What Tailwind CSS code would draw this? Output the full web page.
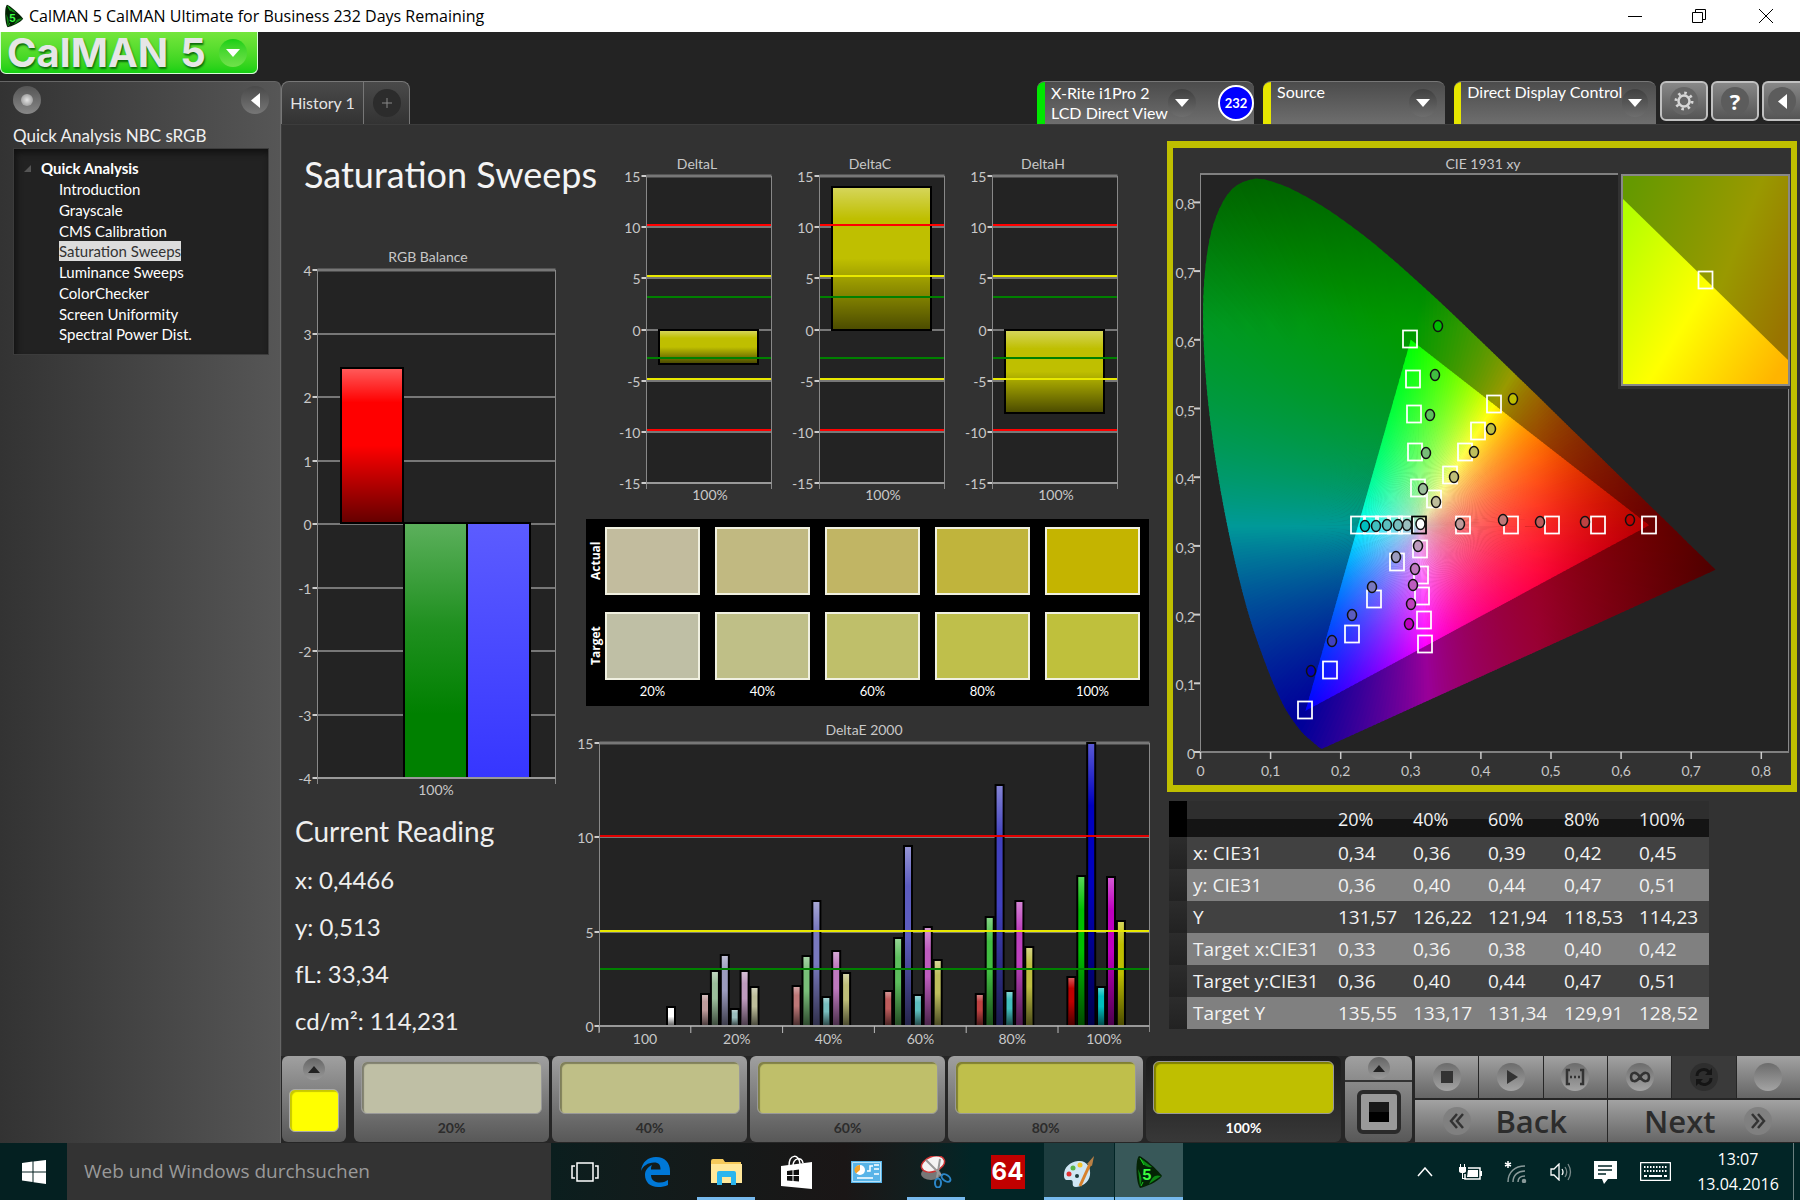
<!DOCTYPE html>
<html lang="en">
<head>
    <meta charset="UTF-8">
    <meta name="viewport" content="width=device-width, initial-scale=1.0">
    <title>CalMAN 5 CalMAN Ultimate for Business</title>
    <script src="https://cdn.jsdelivr.net/npm/@tailwindcss/browser@4"></script>
</head>
<body class="min-h-screen flex flex-col bg-[#232323] font-['Lato','Open_Sans',sans-serif] text-white overflow-x-hidden">
    <!-- shared symbols -->
    <svg class="hidden" aria-hidden="true">
        <symbol id="calman" viewBox="0 0 28 34">
            <path d="M4 1C7 1 22 14 27 21C23 27 10 32 5 33C1 28 0 5 4 1Z" fill="#042304"/>
            <path d="M5 3C8 10 12 13 17 12ZM26 21C20 19 17 22 14 29ZM5 31C8 24 6 20 3 14Z" fill="#0d8a14"/>
            <path d="M5 3L9 10M6 31L8 27" stroke="#19d31f" stroke-width="1"/>
            <text x="7" y="25" font-family="Inter, sans-serif" font-size="15" font-weight="700" fill="#3dff3d" stroke="#021" stroke-width="2" paint-order="stroke">5</text>
        </symbol>
    </svg>

    <header class="h-8 bg-white text-black flex items-center pl-1">
        <svg class="w-5 h-6"><use href="#calman"/></svg>
        <h1 class="ml-[5px] flex-1 font-['Open_Sans',sans-serif] text-[16px] leading-5 whitespace-nowrap">CalMAN 5 CalMAN Ultimate for Business 232 Days Remaining</h1>
        <button aria-label="Minimize" class="w-16 h-8 flex items-center justify-center"><svg class="w-4 h-4" viewBox="0 0 16 16" stroke="#000"><path d="M1 8.5H15"/></svg></button>
        <button aria-label="Restore" class="w-16 h-8 flex items-center justify-center"><svg class="w-4 h-4" viewBox="0 0 16 16" stroke="#000" fill="none"><path d="M1.500 4.500H11.500V14.500H1.500ZM4.500 4.500V1.500H14.500V11.500H11.500"/></svg></button>
        <button aria-label="Close" class="w-[69px] h-8 flex items-center justify-center"><svg class="w-4 h-4" viewBox="0 0 16 16" stroke="#000"><path d="M1 1L15 15M15 1L1 15"/></svg></button>
    </header>

    <div class="flex-1 flex min-w-0">
        <!-- left side: logo and workflow tree -->
        <aside class="w-[281px] shrink-0 flex flex-col">
            <button class="w-[258px] h-[42px] rounded-b-md border border-t-0 border-[#d8ffd8] bg-linear-to-b from-[#74e63c] to-[#12d012] flex items-center pl-[6px] pr-[10px]">
                <span class="font-['Inter',sans-serif] font-bold text-[40px] leading-[38px] text-[#e6e6e6] flex-1 flex gap-3 [text-shadow:1px_2px_2px_#0a6b0a]"><span>CalMAN</span><span>5</span></span>
                <span class="w-7 h-7 rounded-full bg-linear-to-b from-[#12cf12] to-[#6fe24a] flex items-center justify-center"><svg class="w-[14px] h-2" viewBox="0 0 14 8"><path d="M0 0H14L7 8Z" fill="#fff"/></svg></span>
            </button>
            <div class="mt-[7px] flex-1 rounded-tr-md border-t border-r border-[#666] bg-linear-to-r from-[#333] to-[#565656] pl-[13px] pr-[11px]">
                <div class="flex justify-between items-center pt-[4px]">
                    <button aria-label="Record" class="w-7 h-7 rounded-full bg-linear-to-b from-[#555] to-[#888] flex items-center justify-center"><span class="w-3 h-3 rounded-full bg-radial from-[#e5e5e5] to-[#888]"></span></button>
                    <button aria-label="Collapse" class="w-7 h-7 rounded-full bg-linear-to-b from-[#4a4a4a] to-[#777] flex items-center justify-center"><svg class="w-[9px] h-[15px]" viewBox="0 0 9 15"><path d="M9 0V15L0 7.500Z" fill="#fff"/></svg></button>
                </div>
                <h2 class="mt-[10px] text-[17px] leading-6 text-[#f0f0f0] whitespace-nowrap">Quick Analysis NBC sRGB</h2>
                <nav class="border border-[#3c3c3c] bg-[#222] shadow-[inset_2px_4px_6px_#111] pt-[9px] pb-[7px] pl-[10px] text-[15px] h-[207px]">
                    <p class="flex items-center gap-[10px] h-[21px] font-bold"><svg class="w-[7px] h-[7px]" viewBox="0 0 7 7"><path d="M7 0V7H0Z" fill="#555"/></svg>Quick Analysis</p>
                    <ul class="ml-[35px] h-[166px] grid auto-rows-fr items-center whitespace-nowrap">
                        <li><a href="#">Introduction</a></li>
                        <li><a href="#">Grayscale</a></li>
                        <li><a href="#">CMS Calibration</a></li>
                        <li><a href="#" aria-current="page" class="bg-[#dcdcdc] text-[#333] py-px">Saturation Sweeps</a></li>
                        <li><a href="#">Luminance Sweeps</a></li>
                        <li><a href="#">ColorChecker</a></li>
                        <li><a href="#">Screen Uniformity</a></li>
                        <li><a href="#">Spectral Power Dist.</a></li>
                    </ul>
                </nav>
            </div>
        </aside>

        <main class="flex-1 min-w-0 flex flex-col">
            <!-- tabs and device controls -->
            <div class="h-[92px] flex items-end">
                <div class="h-[43px] flex rounded-t-lg border border-b-0 border-[#777] bg-linear-to-b from-[#4a4a4a] to-[#333]">
                    <button class="w-[82px] border-r border-[#777] text-[16px] text-[#e4e4e4]">History 1</button>
                    <button aria-label="Add tab" class="w-[45px] flex items-center justify-center"><span class="w-7 h-7 rounded-full bg-[#2c2c2c] flex items-center justify-center"><svg class="w-3 h-3" viewBox="0 0 12 12" stroke="#888"><path d="M6 1V11M1 6H11"/></svg></span></button>
                </div>
                <div class="ml-auto flex items-start text-[16px] leading-[20px] text-left">
                    <div class="w-[217px] h-[43px] mr-[9px] flex rounded-t-lg overflow-hidden border-t border-[#777] bg-linear-to-b from-[#4c4c4c] to-[#6e6e6e]">
                        <span class="w-2 shrink-0 bg-[#00e600]"></span>
                        <button class="flex-1 flex items-center pl-[6px] pr-3 text-left"><span class="flex-1 whitespace-nowrap">X-Rite i1Pro 2<br>LCD Direct View</span><span class="w-7 h-7 rounded-full bg-linear-to-b from-[#404040] to-[#6e6e6e] flex items-center justify-center"><svg class="w-[14px] h-2" viewBox="0 0 14 8"><path d="M0 0H14L7 8Z" fill="#fff"/></svg></span></button>
                        <span class="w-px my-1 bg-[#333]"></span>
                        <button class="shrink-0 ml-[10px] mr-[3px] my-auto w-9 h-9 rounded-full border-2 border-white bg-[#0000ff] text-[13px] font-bold text-center">232</button>
                    </div>
                    <button class="w-[182px] h-[43px] mr-[9px] flex rounded-t-lg overflow-hidden border-t border-[#777] bg-linear-to-b from-[#4c4c4c] to-[#6e6e6e] pr-2 text-left">
                        <span class="w-2 h-full bg-[#e6e600]"></span><span class="pl-[6px] flex-1">Source</span><span class="mt-[7px] w-7 h-7 rounded-full bg-linear-to-b from-[#404040] to-[#6e6e6e] flex items-center justify-center"><svg class="w-[14px] h-2" viewBox="0 0 14 8"><path d="M0 0H14L7 8Z" fill="#fff"/></svg></span>
                    </button>
                    <button class="w-[202px] h-[43px] mr-1 flex rounded-t-lg overflow-hidden border-t border-[#777] bg-linear-to-b from-[#4c4c4c] to-[#6e6e6e] pr-2 text-left">
                        <span class="w-2 h-full bg-[#e6e600]"></span><span class="pl-[6px] flex-1 whitespace-nowrap">Direct Display Control</span><span class="mt-[7px] w-7 h-7 rounded-full bg-linear-to-b from-[#404040] to-[#6e6e6e] flex items-center justify-center"><svg class="w-[14px] h-2" viewBox="0 0 14 8"><path d="M0 0H14L7 8Z" fill="#fff"/></svg></span>
                    </button>
                    <button aria-label="Settings" class="w-12 h-10 mr-[3px] rounded-md border-2 border-[#c0c0c0] bg-linear-to-b from-[#888] to-[#555] flex items-center justify-center"><span class="w-7 h-7 rounded-full bg-[#666] flex items-center justify-center"><svg class="w-5 h-5" viewBox="0 0 20 20" fill="none" stroke="#d6d6d6"><circle cx="10" cy="10" r="5.500" stroke-width="2.500"/><circle cx="10" cy="10" r="8" stroke-width="3" stroke-dasharray="2.500 3.780"/></svg></span></button>
                    <button aria-label="Help" class="w-12 h-10 mr-[3px] rounded-md border-2 border-[#c0c0c0] bg-linear-to-b from-[#888] to-[#555] flex items-center justify-center"><span class="w-7 h-7 rounded-full bg-[#5c5c5c] font-['Open_Sans',sans-serif] font-bold text-[22px] leading-7 text-center">?</span></button>
                    <button aria-label="Hide bar" class="w-[38px] h-10 rounded-l-md border-2 border-r-0 border-[#c0c0c0] bg-linear-to-b from-[#888] to-[#555] flex items-center justify-center"><span class="w-7 h-7 rounded-full bg-[#5c5c5c] flex items-center justify-center"><svg class="w-[9px] h-[15px]" viewBox="0 0 9 15"><path d="M9 0V15L0 7.500Z" fill="#fff"/></svg></span></button>
                </div>
            </div>

            <div class="flex-1 bg-[#323232] border-t border-l border-[#3c3c3c] grid grid-cols-[minmax(0,300fr)_minmax(0,584fr)_minmax(0,634fr)] items-start">
                <section>
                    <h2 class="h-[114px] pl-[22px] pt-[27px] text-[36px] leading-[44px] whitespace-nowrap text-[#f4f4f4]">Saturation Sweeps</h2>
                    <svg id="rgbBalance" class="block w-full h-auto overflow-visible" viewBox="0 0 300 565"></svg>
                    <div class="pl-[13px] pt-[2px] text-[24px] leading-[47px] text-[#eee]">
                        <h3 class="text-[28px] leading-[50px]">Current Reading</h3>
                        <p>x: 0,4466</p>
                        <p>y: 0,513</p>
                        <p>fL: 33,34</p>
                        <p>cd/m²: 114,231</p>
                    </div>
                </section>

                <section>
                    <div class="pt-[14px] pl-[38px] pr-[27px] grid grid-cols-3">
                        <svg id="deltaL" class="block w-full h-auto overflow-visible" viewBox="0 0 173 370"></svg>
                        <svg id="deltaC" class="block w-full h-auto overflow-visible" viewBox="0 0 173 370"></svg>
                        <svg id="deltaH" class="block w-full h-auto overflow-visible" viewBox="0 0 173 370"></svg>
                    </div>
                    <div id="swatches" class="mt-[10px] ml-1 mr-[17px] h-[187px] bg-black pt-2 pr-[9px] flex flex-col"></div>
                    <svg id="deltaE" class="mt-[8px] block w-full h-auto overflow-visible" viewBox="0 0 584 340"></svg>
                </section>

                <section class="pt-4 pl-px pr-[3px]">
                    <div class="border-x-[6px] border-y-[7px] border-[#bfbf00]">
                        <svg id="cie" class="block w-full h-auto overflow-visible" viewBox="0 0 618 637"></svg>
                    </div>
                    <table class="mt-[9px] ml-[2px] w-[540px] table-fixed border-collapse text-left font-['Open_Sans',sans-serif] text-[19px] leading-8 text-[#f2f2f2]">
                        <colgroup><col class="w-[18px]"><col class="w-[146px]"><col class="w-[75px]"><col class="w-[75px]"><col class="w-[76px]"><col class="w-[75px]"><col class="w-[75px]"></colgroup>
                        <thead>
                            <tr class="h-9 bg-linear-to-b from-[#2e2e2e] from-50% to-[#141414] to-50%">
                                <td class="bg-black"></td><td></td>
                                <th class="pl-[5px] font-medium text-[18px]">20%</th><th class="pl-[5px] font-medium text-[18px]">40%</th><th class="pl-[5px] font-medium text-[18px]">60%</th><th class="pl-[5px] font-medium text-[18px]">80%</th><th class="pl-[5px] font-medium text-[18px]">100%</th>
                            </tr>
                        </thead>
                        <tbody id="readings"></tbody>
                    </table>
                </section>
            </div>

            <!-- level picker and transport -->
            <div class="h-[87px] pb-px flex bg-[#262626] text-[#2c2c2c]">
                <button aria-label="Color" class="w-[64px] ml-px mr-2 rounded-md bg-linear-to-b from-[#a0a0a0] to-[#585858] flex flex-col items-center gap-[9px] pt-[2px]">
                    <span class="w-[22px] h-[22px] rounded-full bg-linear-to-b from-[#666] to-[#999] flex items-center justify-center"><svg class="w-3 h-[7px]" viewBox="0 0 12 7"><path d="M0 7H12L6 0Z" fill="#222"/></svg></span>
                    <span class="w-[50px] h-[43px] rounded-md bg-[#ffff00] border border-[#aaa] shadow-[inset_2px_2px_1px_#c8c800]"></span>
                </button>
                <div id="levels" class="flex-1 grid grid-cols-5 gap-x-[3px]"></div>
                <div class="w-[67px] mr-[3px] ml-1 rounded-md overflow-hidden bg-linear-to-b from-[#a0a0a0] to-[#585858] flex flex-col">
                    <button aria-label="Show patterns" class="h-[26px] border-b-2 border-[#333] flex items-center justify-center"><span class="w-[22px] h-[22px] rounded-full bg-linear-to-b from-[#666] to-[#999] flex items-center justify-center"><svg class="w-3 h-[7px]" viewBox="0 0 12 7"><path d="M0 7H12L6 0Z" fill="#222"/></svg></span></button>
                    <button aria-label="Pattern window" class="flex-1 flex items-center justify-center"><span class="w-11 h-[44px] rounded-md border-4 border-[#2a2a2a] bg-[#999] flex items-center justify-center"><span class="w-5 h-5 bg-linear-to-b from-[#181818] from-50% to-black to-50%"></span></span></button>
                </div>
                <div class="w-[385px] flex flex-col gap-[2px]">
                    <div id="transport" class="h-[42px] grid grid-cols-6 gap-px"></div>
                    <div class="h-[42px] grid grid-cols-2 gap-px font-['Open_Sans',sans-serif] font-semibold text-[31px] leading-10">
                        <button class="bg-linear-to-b from-[#a2a2a2] to-[#666] flex items-center justify-between pl-7 pr-10"><svg class="w-7 h-7" viewBox="0 0 28 28"><circle cx="14" cy="14" r="14" fill="#808080"/><path d="M14 7L8 14L14 21M20 7L14 14L20 21" fill="none" stroke="#333" stroke-width="2.500"/></svg>Back</button>
                        <button class="bg-linear-to-b from-[#a2a2a2] to-[#666] flex items-center justify-between pl-9 pr-7">Next<svg class="w-7 h-7" viewBox="0 0 28 28"><circle cx="14" cy="14" r="14" fill="#808080"/><path d="M14 7L20 14L14 21M8 7L14 14L8 21" fill="none" stroke="#333" stroke-width="2.500"/></svg></button>
                    </div>
                </div>
            </div>
        </main>
    </div>

    <!-- windows taskbar -->
    <footer class="h-[57px] flex bg-[#022526] font-['Open_Sans',sans-serif]">
        <button aria-label="Start" class="w-[67px] bg-[#042021] flex items-center justify-center"><svg class="w-6 h-6" viewBox="0 0 24 24" fill="#fff"><path d="M0 3L10.500 1.500V11.500H0ZM11.500 1.400L24 0V11.500H11.500ZM0 12.500H10.500V22L0 20.500ZM11.500 12.500H24V24L11.500 22.300Z"/></svg></button>
        <input type="text" aria-label="Search" placeholder="Web und Windows durchsuchen" class="w-[484px] bg-[#333] pl-[17px] text-[19px] placeholder:text-[#9a9a9a] outline-none">
        <div class="flex bg-linear-to-r from-[#0b1e1e] via-[#1a1616] via-70% to-[#022526]">
            <button aria-label="Task view" class="w-[68px] flex items-center justify-center"><svg class="w-7 h-5" viewBox="0 0 28 20" fill="none" stroke="#fff" stroke-width="1.500"><path d="M6 1H22V19H6ZM4 4H1V16H4M24 4H27V16H24"/></svg></button>
            <button aria-label="Edge" class="w-[72px] flex items-center justify-center"><svg class="w-[29px] h-[30px]" viewBox="0 0 29 30"><path d="M0 14C1 5 7 0 15 0C24 0 29 6 29 14V18H10C10 24 15 25.500 19 25.500C23 25.500 25 24 27 23V28C24 29.500 21 30 17 30C9 30 4 25 4 18C4 13 7 10 11 8C10 10 10 11 10 12.500H19.500C19.500 8 18 5.500 13 5.500C7 5.500 2 9 0 14Z" fill="#0078d7"/></svg></button>
            <button aria-label="Explorer" class="w-[58px] mx-[6px] border-b-[3px] border-[#76b9ed] flex items-center justify-center pt-[3px]"><svg class="w-[31px] h-[26px]" viewBox="0 0 31 26"><path d="M0 2Q0 0 2 0H12L14 3H30V24H0Z" fill="#f5c95a"/><path d="M0 5H31V24H0Z" fill="#ffe79a"/><path d="M6 26V14Q6 12 8 12H23Q25 12 25 14V26H20V18H11V26Z" fill="#2bb5ee"/></svg></button>
            <button aria-label="Store" class="w-[70px] flex items-center justify-center"><svg class="w-[31px] h-[34px]" viewBox="0 0 31 34"><path d="M0 11L31 7V34L0 31Z" fill="#fff"/><path d="M8 11C8 -1 18 -2 19 9M12 11C12 3 21 1 22 8" stroke="#fff" stroke-width="1.500" fill="none"/><path d="M6 16L11.500 15.300V20H6ZM12.500 15.200L18 14.500V20H12.500ZM6 21H11.500V26L6 25.400ZM12.500 21H18V26.500L12.500 26Z" fill="#111"/></svg></button>
            <button aria-label="Control panel" class="w-[70px] flex items-center justify-center"><svg class="w-[31px] h-[22px]" viewBox="0 0 31 22"><path d="M0 0H31V22H0Z" fill="#58b4e8"/><path d="M1.500 1.500H29.500V20.500H1.500Z" fill="none" stroke="#b6e2fa"/><circle cx="9" cy="9" r="5" fill="#fff"/><path d="M9 9V4A5 5 0 0 0 5 12.500Z" fill="#f1a128"/><path d="M16 10H19V5H22M23 4H28M23 8H28M23 13H28M6 17H22" stroke="#fff" stroke-width="1.500" fill="none"/></svg></button>
            <button aria-label="Snipping tool" class="w-[58px] mx-[6px] border-b-[3px] border-[#76b9ed] flex items-center justify-center pt-[3px]"><svg class="w-[32px] h-[32px]" viewBox="0 0 32 32"><ellipse cx="11" cy="18" rx="10" ry="6" fill="#777"/><ellipse cx="13" cy="8" rx="12" ry="7.500" fill="#f4f4f4" stroke="#c33" stroke-width="1.500" transform="rotate(-20 13 8)"/><path d="M6 4L22 20M20 3L17 22" stroke="#999" stroke-width="2"/><ellipse cx="18" cy="27" rx="3" ry="4.500" fill="none" stroke="#2b86c8" stroke-width="2"/><ellipse cx="26" cy="22" rx="5" ry="3" fill="none" stroke="#2b86c8" stroke-width="2" transform="rotate(35 26 22)"/></svg></button>
        </div>
        <button aria-label="AIDA64" class="w-[73px] flex items-center justify-center"><span class="w-[34px] h-[34px] bg-[#c00000] font-['Inter',sans-serif] font-bold text-[24px] leading-[34px] text-white">64</span></button>
        <button aria-label="Paint" class="w-[70px] mr-px bg-[#1d3d3f] border-b-[3px] border-[#76b9ed] flex items-center justify-center pt-[3px]"><svg class="w-[32px] h-[32px]" viewBox="0 0 32 32"><path d="M15 5C24 4 28 12 27 19C26 27 18 31 13 31C7 31 12 25 8 24C4 24 1 25 1 19C1 11 7 6 15 5Z" fill="#cfe6f4"/><circle cx="6" cy="18" r="2.500" fill="#e03030"/><circle cx="10" cy="12" r="2.500" fill="#58b447"/><circle cx="17" cy="9" r="2.500" fill="#f3c52d"/><circle cx="14" cy="20" r="2" fill="#1d3d3f"/><path d="M27 8L17 30" stroke="#d7802b" stroke-width="3"/><path d="M31 0L29 10L24 8Z" fill="#b98045"/></svg></button>
        <button aria-label="CalMAN" class="w-[68px] bg-[#385859] border-b-[3px] border-[#76b9ed] flex items-center justify-center pt-[3px]"><svg class="w-7 h-[34px]"><use href="#calman"/></svg></button>

        <div class="ml-auto flex items-center text-white">
            <svg class="w-4 h-[10px] mr-[25px]" viewBox="0 0 16 10" fill="none" stroke="#fff" stroke-width="1.500"><path d="M1 9L8 1L15 9"/></svg>
            <svg class="w-6 h-[18px] mr-[22px]" viewBox="0 0 24 18"><path d="M10 5H22V16H7V11" fill="none" stroke="#fff" stroke-width="1.500"/><path d="M10 7H20V14H9Z" fill="#fff"/><path d="M22 8H24V13H22ZM1 4H8V8Q8 10 4.500 10Q1 10 1 8ZM2 1H3V4H2ZM6 1H7V4H6ZM4 10H5V15H8V16H4Z" fill="#fff"/></svg>
            <svg class="w-6 h-[22px] mr-[22px]" viewBox="0 0 24 22" fill="none" stroke="#8a9a9a" stroke-width="1.500"><path d="M4 21C4 11 11 5 21 5M9 21C9 14 14 10 21 10M14 21C14 17 17 15 21 15"/><circle cx="20" cy="20" r="1.500" fill="#8a9a9a"/><path d="M4 0V7M1 2L7 5M7 2L1 5" stroke="#fff"/></svg>
            <svg class="w-[22px] h-[18px] mr-[22px]" viewBox="0 0 22 18" fill="none" stroke="#fff" stroke-width="1.300"><path d="M1 6H4L9 1V17L4 12H1ZM12 6Q14 9 12 12"/><path d="M15 4Q18.500 9 15 14M18 1Q23 9 18 17" stroke="#7a8a8a"/></svg>
            <svg class="w-6 h-6 mr-[22px]" viewBox="0 0 24 24"><path d="M0 1H23V19H14L10 24L8 19H0Z" fill="#fff"/><path d="M4 6H18M4 10H18M4 14H12" stroke="#022526" stroke-width="1.500"/></svg>
            <svg class="w-[31px] h-[19px] mr-[22px]" viewBox="0 0 31 19" fill="none" stroke="#fff"><rect x=".5" y=".5" width="30" height="18" rx="1" stroke-width="1.500"/><path d="M4 5H27M4 9H27" stroke-width="2" stroke-dasharray="1.500 1.500"/><path d="M4 14H7M9 14H22M24 14H27" stroke-width="2"/></svg>
            <p class="w-[90px] text-[16px] leading-[25px] text-center whitespace-nowrap">13:07<br>13.04.2016</p>
            <span class="ml-[10px] w-px h-[57px] mr-[6px] bg-[#6a7f7f]"></span>
        </div>
    </footer>

    <script>
        const FONT = 'font-family="Lato, sans-serif" font-size="14" fill="#c8c8c8"';
        const text = (x, y, s, anchor = 'middle') => `<text x="${x}" y="${y + 5}" text-anchor="${anchor}" ${FONT}>${s}</text>`;
        const line = (x1, y1, x2, y2, color = '#808080', w = 2) => `<path d="M${x1} ${y1}L${x2} ${y2}" stroke="${color}" stroke-width="${w}"/>`;
        const box = (x, y, w, h, fill) => `<rect x="${x}" y="${y}" width="${w}" height="${h}" fill="${fill}"/>`;

        // gloss laid over every bar
        const gloss = id => `<defs><linearGradient id="${id}" x2="0" y2="1"><stop offset="0" stop-color="#fff" stop-opacity=".35"/><stop offset=".22" stop-color="#fff" stop-opacity="0"/><stop offset=".5" stop-color="#000" stop-opacity="0"/><stop offset="1" stop-color="#000" stop-opacity=".6"/></linearGradient></defs>`;
        const bar = (x, y, w, h, fill, g) => `<rect x="${x}" y="${y}" width="${w}" height="${h}" fill="${fill}" stroke="#000" stroke-width="2"/>` + (g ? box(x + 1, y + 1, w - 2, h - 2, `url(#${g})`) : '');

        // plot frame with a labelled value axis
        function frame(x, y, w, h, max, min, step) {
            const py = v => Math.round(y + (max - v) / (max - min) * h);
            let s = box(x, y, w, h, '#232323');
            for (let v = max; v >= min; v -= step) {
                s += line(x - 5, py(v), x, py(v), '#ccc') + line(x, py(v), x + w, py(v), '#777', v === max ? 3 : 2) + text(x - 6, py(v) + 1, v, 'end');
            }
            return { py, svg: s, edges: line(x, y, x, y + h + 6, '#888', 1) + line(x + w, y, x + w, y + h + 6, '#888', 1) + line(x, y + h, x + w, y + h, '#999') };
        }

        function drawRgb() {
            const f = frame(35.5, 31, 238, 508, 4, -4, 1);
            document.getElementById('rgbBalance').innerHTML = `${gloss('gR')}<defs>
                <linearGradient id="gG" x2="0" y2="1"><stop offset="0" stop-color="#5cb05c"/><stop offset=".4" stop-color="#209020"/><stop offset=".75" stop-color="#008000"/></linearGradient>
                <linearGradient id="gB" x2="0" y2="1"><stop offset="0" stop-color="#5c5cff"/><stop offset="1" stop-color="#3636ff"/></linearGradient></defs>`
                + text(146, 18, 'RGB Balance') + f.svg
                + bar(59, f.py(2.46), 62, 155, '#ff0000', 'gR')
                + bar(122, f.py(0) - 1, 63, 255, 'url(#gG)') + bar(185, f.py(0) - 1, 63, 255, 'url(#gB)')
                + f.edges + text(154, 551, '100%');
        }

        function drawDelta(id, title, value) {
            const f = frame(26.5, 37, 125, 307, 15, -15, 5);
            const top = f.py(Math.max(value, 0)), bottom = f.py(Math.min(value, 0));
            let s = gloss('g' + id) + text(77, 25, title) + f.svg + bar(39, top, 99, bottom - top, '#bfbf00', 'g' + id);
            for (const [v, c] of [[10, '#f00'], [5, '#e8e800'], [3, '#008000'], [-3, '#008000'], [-5, '#e8e800'], [-10, '#f00']]) {
                s += line(26.500, f.py(v) - 2, 151.500, f.py(v) - 2, c);
            }
            document.getElementById(id).innerHTML = s + f.edges + text(90, 356, '100%');
        }

        const offChannel = [155, 120, 92, 65, 0];
        const shade = (mask, i) => `rgb(${[...mask].map(b => b === '1' ? 190 : offChannel[i]).join()})`;
        const hues = ['100', '010', '001', '011', '101', '110'];

        function drawDeltaE() {
            const data = [
                [1.7, 2.92, 3.77, .9, 2.92, 2.05],
                [2.1, 3.7, 6.65, 1.55, 4, 2.8],
                [1.88, 4.68, 9.55, 1.63, 5.25, 3.5],
                [1.7, 5.76, 12.75, 1.88, 6.65, 4.2],
                [2.6, 7.97, 15, 2.05, 7.88, 5.57]
            ];
            const f = frame(17.5, 29, 550, 283, 15, 0, 5);
            let s = gloss('gE') + text(282, 16, 'DeltaE 2000') + f.svg + bar(85, f.py(1.03), 8, 312 - f.py(1.03), '#fff', 'gE');
            data.forEach((group, i) => group.forEach((v, j) => {
                s += bar(119 + i * 91.6 + j * 9.9, f.py(v), 8, 312 - f.py(v), shade(hues[j], i), 'gE');
            }));
            s += line(17, f.py(10) - 1, 568, f.py(10) - 1, '#e00000') + line(17, f.py(5) - 1, 568, f.py(5) - 1, '#e8e800') + line(17, f.py(3), 568, f.py(3), '#008000') + f.edges;
            ['100', '20%', '40%', '60%', '80%', '100%'].forEach((t, i) => {
                s += text(63 + i * 91.8, 325, t) + line(17 + i * 91.8, 312, 17 + i * 91.8, 319, '#bbb', 1);
            });
            document.getElementById('deltaE').innerHTML = s;
        }

        // chromaticity diagram
        const locus = [[.1741,.005],[.1703,.0058],[.1644,.0109],[.1566,.0177],[.144,.0297],[.1241,.0578],[.1096,.0868],[.0913,.1327],[.0687,.2007],[.0454,.295],[.0235,.4127],[.0082,.5384],[.0039,.6548],[.0139,.7502],[.0389,.812],[.0743,.8338],[.1142,.8262],[.1547,.8059],[.1929,.7816],[.2296,.7543],[.2658,.7243],[.3016,.6923],[.3373,.6589],[.3731,.6245],[.4087,.5896],[.4441,.5547],[.4788,.5202],[.5125,.4866],[.5448,.4544],[.5752,.4242],[.6029,.3965],[.627,.3725],[.6482,.3514],[.6658,.334],[.6915,.3083],[.714,.2859],[.726,.274],[.7347,.2653]];
        const white = [.3127, .329];
        const gamut = [[.64, .33], [.3, .6], [.15, .06]];
        const cx = x => 27.5 + 701 * x, cy = y => 604 - 687 * y;

        function rgbAt(x, y, level) {
            const X = x / y, Z = (1 - x - y) / y;
            const c = [3.2406 * X - 1.5372 - .4986 * Z, -.9689 * X + 1.8758 + .0415 * Z, .0557 * X - .204 + 1.057 * Z].map(v => Math.max(v, 0));
            const m = Math.max(...c);
            const dim = Math.min(1, 1 - (x - .48) * 1.9, 1 - (y - .62) * 1.65) * level;
            return `rgb(${c.map(v => Math.round(v / m * 255 * dim)).join()})`;
        }

        // distance from the white point to a polygon edge along a direction
        function reach(dx, dy, poly) {
            let best = 0;
            poly.forEach((a, i) => {
                const b = poly[(i + 1) % poly.length], ex = b[0] - a[0], ey = b[1] - a[1];
                const d = dx * ey - dy * ex;
                if (!d) return;
                const t = ((a[0] - white[0]) * ey - (a[1] - white[1]) * ex) / d;
                const u = ((a[0] - white[0]) * dy - (a[1] - white[1]) * dx) / d;
                if (t > 0 && u >= -.001 && u <= 1.001) best = Math.max(best, t);
            });
            return best;
        }

        function fan(id, poly, from, level) {
            const n = 360, step = Math.PI * 2 / n;
            let s = '';
            for (let i = 0; i < n; i++) {
                const a = i * step, dx = Math.cos(a), dy = Math.sin(a), r = reach(dx, dy, poly);
                const start = from ? reach(dx, dy, from) : 0;
                let stops = '';
                for (let k = 0; k <= 8; k++) {
                    const t = start + (r - start) * k / 8;
                    stops += `<stop offset="${(t / r).toFixed(3)}" stop-color="${rgbAt(white[0] + dx * t, white[1] + dy * t, level)}"/>`;
                }
                const w = [cx(white[0]), cy(white[1])];
                const p = (ang, len) => `${cx(white[0] + Math.cos(ang) * len).toFixed(1)} ${cy(white[1] + Math.sin(ang) * len).toFixed(1)}`;
                s += `<linearGradient id="${id}${i}" gradientUnits="userSpaceOnUse" x1="${w[0]}" y1="${w[1]}" x2="${cx(white[0] + dx * r)}" y2="${cy(white[1] + dy * r)}">${stops}</linearGradient>`
                    + `<path d="M${w.join(' ')}L${p(a - step * .5, r * 1.15)}L${p(a + step * .9, r * 1.15)}Z" fill="url(#${id}${i})"/>`;
            }
            return s;
        }

        // rounded outline through the locus samples
        function smooth(poly) {
            const q = poly.map(([x, y]) => [cx(x), cy(y)]);
            let d = `M${q[0]}`;
            for (let i = 0; i < q.length - 1; i++) {
                const a = q[Math.max(i - 1, 0)], b = q[i], c = q[i + 1], e = q[Math.min(i + 2, q.length - 1)];
                d += `C${b[0] + (c[0] - a[0]) / 6} ${b[1] + (c[1] - a[1]) / 6} ${c[0] - (e[0] - b[0]) / 6} ${c[1] - (e[1] - b[1]) / 6} ${c[0]} ${c[1]}`;
            }
            return d + 'Z';
        }

        const targets = [
            [[1463,525],[1511,525],[1552,525],[1598,525],[1649,525]],
            [[1418,488],[1415,452],[1414,414],[1413,379],[1410,339]],
            [[1397,562],[1374,599],[1352,634],[1330,670],[1305,710]],
            [[1406,525],[1395,525],[1383,525],[1371,525],[1358,525]],
            [[1420,549],[1421,575],[1422,596],[1424,620],[1425,644]],
            [[1434,499],[1450,475],[1465,452],[1478,431],[1494,404]]
        ];
        const actuals = [
            [[1460,524],[1503,520],[1540,522],[1585,522],[1630,520]],
            [[1423,489],[1426,453],[1430,415],[1435,375],[1438,326]],
            [[1396,557],[1372,587],[1352,615],[1332,641],[1311,671]],
            [[1407,525],[1398,525],[1387,525],[1376,526],[1365,526]],
            [[1418,546],[1415,569],[1413,585],[1411,604],[1409,624]],
            [[1436,502],[1454,477],[1474,452],[1491,429],[1513,399]]
        ];
        const square = (x, y, c = '#fff') => `<rect x="${x - 7}" y="${y - 8.500}" width="14" height="17" fill="none" stroke="${c}" stroke-width="1.750"/>`;

        function drawCie() {
            const pts = poly => poly.map(p => `${cx(p[0]).toFixed(1)},${cy(p[1]).toFixed(1)}`).join(' ');
            let s = `<defs><clipPath id="locus"><path d="${smooth(locus)}"/></clipPath><clipPath id="gamut"><polygon points="${pts(gamut)}"/></clipPath>
                <linearGradient id="inA" gradientUnits="userSpaceOnUse" x1="440" y1="90" x2="620" y2="200"><stop offset="0" stop-color="#b4ff00"/><stop offset=".5" stop-color="#ffff00"/><stop offset="1" stop-color="#ffb400"/></linearGradient>
                <linearGradient id="inB" gradientUnits="userSpaceOnUse" x1="449" y1="60" x2="630" y2="130"><stop offset="0" stop-color="#659900"/><stop offset=".62" stop-color="#999900"/><stop offset="1" stop-color="#997400"/></linearGradient></defs>`
                + text(310, 16, 'CIE 1931 xy') + box(27.5, 26, 588.5, 578, '#232323')
                + `<g clip-path="url(#locus)">${fan('o', locus, gamut, .6)}</g><g clip-path="url(#gamut)">${fan('i', gamut, null, 1)}</g>`
                + line(27, 26, 616, 26) + line(27.5, 26, 27.5, 610, '#888', 1) + line(615.5, 26, 615.5, 604, '#888', 1) + line(27, 604, 616, 604);
            for (let i = 0; i <= 8; i++) {
                const label = i ? '0,' + i : '0';
                s += line(cx(i / 10), 604, cx(i / 10), 611, '#ccc', 1.5) + text(cx(i / 10), 623, label)
                    + line(21, cy(i / 10), 27, cy(i / 10), '#ccc') + text(22, cy(i / 10) + 2, label, 'end');
            }
            // magnified view of the selected point
            s += box(445, 24, 173, 217, '#323232') + box(449, 27, 167, 210, 'url(#inB)') + '<path d="M449 50L616 213V237H449Z" fill="url(#inA)"/>'
                + '<rect x="449" y="27" width="167" height="210" fill="none" stroke="#888" stroke-width="2"/>' + square(532.5, 132);
            targets.flat().forEach(([x, y]) => { s += square(x - 1173, y - 148); });
            s += square(246, 377, '#000');
            actuals.forEach((row, j) => row.forEach(([x, y], i) => {
                s += `<ellipse cx="${x - 1173}" cy="${y - 148}" rx="4.500" ry="5.500" fill="${shade(hues[j], i)}" stroke="#111" stroke-width="1.500"/>`;
            }));
            s += '<ellipse cx="247.500" cy="376" rx="4.500" ry="5.500" fill="#fff" stroke="#111" stroke-width="1.500"/>';
            document.getElementById('cie').innerHTML = s;
        }

        const levels = ['20%', '40%', '60%', '80%', '100%'];
        const swatchRows = [
            ['Actual', ['#c2bc9e', '#c1b981', '#c1b564', '#c0b43c', '#c4b400']],
            ['Target', ['#bfbfa5', '#bfbf87', '#bfbf6a', '#bfbf4b', '#bfc03c']]
        ];
        document.getElementById('swatches').innerHTML = swatchRows.map(([name, colors]) =>
            `<div class="flex h-[68px] mb-[17px]"><span class="w-[19px] flex items-center justify-center text-[12px] leading-4 font-bold font-['Open_Sans',sans-serif] [writing-mode:vertical-rl] rotate-180">${name}</span><div class="flex-1 grid grid-cols-5 gap-x-[15px]">`
            + colors.map(c => `<span class="border-2 border-[#f0f0e0]" style="background:${c}"></span>`).join('') + '</div></div>').join('')
            + `<div class="-mt-4 pl-[19px] grid grid-cols-5 gap-x-[15px]">${levels.map(l => `<span class="text-center text-[13px] leading-5">${l}</span>`).join('')}</div>`;

        const rows = [
            ['x: CIE31', '0,34', '0,36', '0,39', '0,42', '0,45'],
            ['y: CIE31', '0,36', '0,40', '0,44', '0,47', '0,51'],
            ['Y', '131,57', '126,22', '121,94', '118,53', '114,23'],
            ['Target x:CIE31', '0,33', '0,36', '0,38', '0,40', '0,42'],
            ['Target y:CIE31', '0,36', '0,40', '0,44', '0,47', '0,51'],
            ['Target Y', '135,55', '133,17', '131,34', '129,91', '128,52']
        ];
        document.getElementById('readings').innerHTML = rows.map((r, i) =>
            `<tr class="${i % 2 ? 'bg-[#808080]' : 'bg-[#414141]'}"><td class="bg-linear-to-b from-[#2c2c2c] to-[#222]"></td><th class="pl-[6px] font-normal whitespace-nowrap">${r[0]}</th>${r.slice(1).map(v => `<td class="pl-[5px]">${v}</td>`).join('')}</tr>`).join('');

        const levelColors = ['#bfbfa5', '#bfbf87', '#bfbf6a', '#bfbf4b', '#bfbf00'];
        document.getElementById('levels').innerHTML = levels.map((l, i) =>
            `<button class="rounded-md px-[7px] pt-[5px] flex flex-col font-bold text-[14px] leading-7 ${i === 4 ? 'bg-linear-to-b from-[#1c1c1c] to-[#383838] text-white' : 'bg-linear-to-b from-[#a0a0a0] to-[#585858]'}"><span class="block w-full h-[53px] rounded-md border border-[#999] shadow-[inset_2px_2px_1px_#00000055]" style="background-color:${levelColors[i]}"></span><span class="w-full text-center">${l}</span></button>`).join('');

        const icons = [
            ['Stop', '<path d="M8 8H20V20H8Z" fill="#333"/>'],
            ['Play', '<path d="M10 7L21 14L10 21Z" fill="#333"/>'],
            ['Series', '<path d="M9 7H6V21H9M19 7H22V21H19" fill="none" stroke="#333" stroke-width="2.500"/><path d="M9 14H19" stroke="#333" stroke-width="2.500" stroke-dasharray="2 2"/>'],
            ['Continuous', '<path d="M14 14C10 8 5 9 5 14S10 20 14 14S23 9 23 14S18 20 14 14Z" fill="none" stroke="#333" stroke-width="2.500"/>'],
            ['Refresh', '<path d="M7 13C7 7 15 4 19 9M21 15C21 21 13 24 9 19" fill="none" stroke="#151515" stroke-width="3"/><path d="M22 5V12H15ZM6 23V16H13Z" fill="#151515"/>'],
            ['Blank', '']
        ];
        document.getElementById('transport').innerHTML = icons.map(([name, d], i) =>
            `<button aria-label="${name}" class="flex items-center justify-center ${i === 4 ? 'bg-[#3a3a3a]' : 'bg-linear-to-b from-[#a2a2a2] to-[#666]'}"><span class="w-7 h-7 rounded-full ${i === 4 ? 'bg-[#2e2e2e]' : 'bg-linear-to-b from-[#6c6c6c] to-[#a4a4a4]'}"><svg class="w-7 h-7" viewBox="0 0 28 28">${d}</svg></span></button>`).join('');

        drawRgb();
        drawDelta('deltaL', 'DeltaL', -3.4);
        drawDelta('deltaC', 'DeltaC', 13.9);
        drawDelta('deltaH', 'DeltaH', -8.2);
        drawDeltaE();
        drawCie();
    </script>
</body>
</html>
